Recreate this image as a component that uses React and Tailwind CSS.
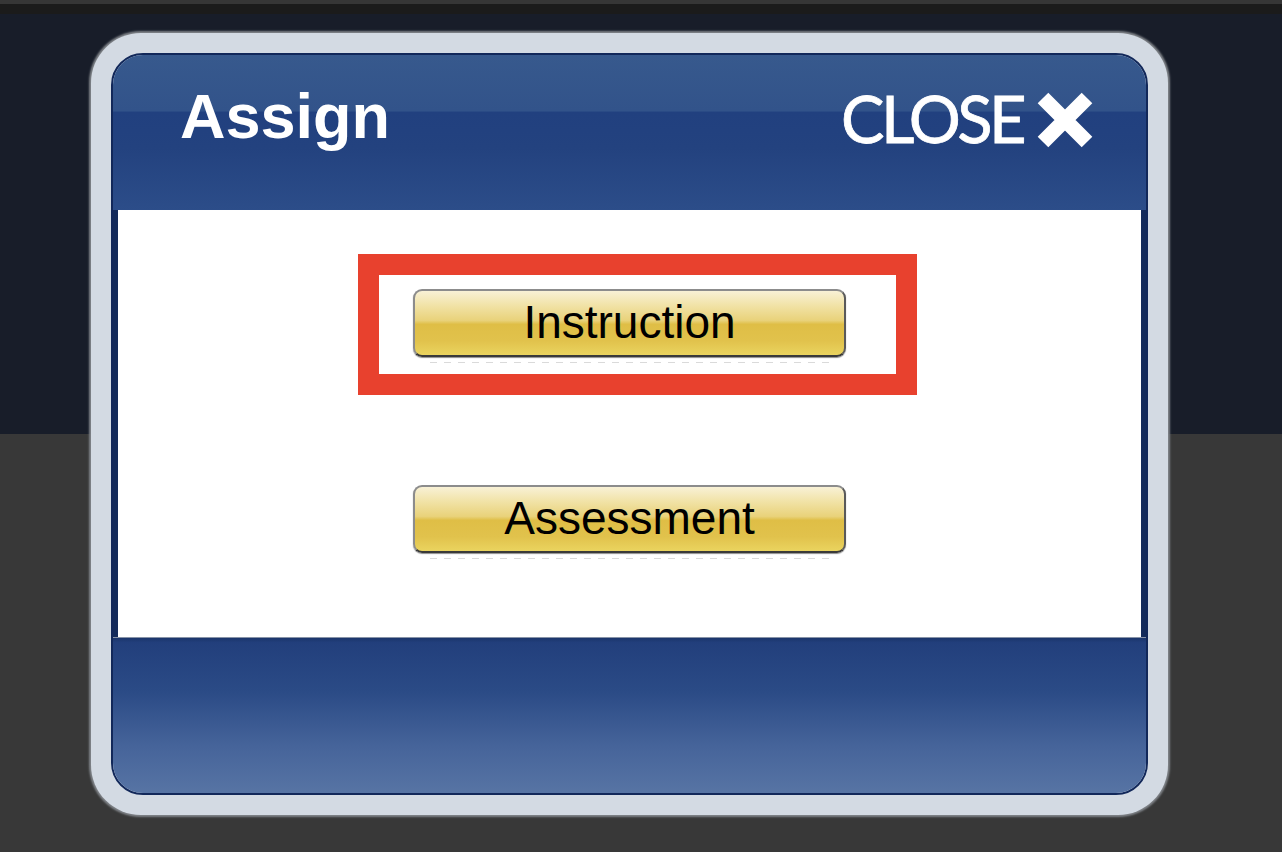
import React from "react";

const GoldButton = ({ label }) => {
  return (
    <div className="flex flex-col items-center gap-[5px]">
      <button className="w-[433px] h-[68px] flex items-center justify-center pb-[2px] rounded-[9px] border-2 border-[#8c8c8c] border-r-[#5a5a5a] border-b-[#3a3a3a] bg-[linear-gradient(180deg,#f8f1d6_0%,#f1e3a8_22%,#e9d27a_46%,#dfbe46_52%,#e1c24c_78%,#ead45f_100%)] shadow-[0_1px_1px_rgba(0,0,0,0.45)] text-[46px] leading-none text-black font-['Liberation_Sans',Arial,sans-serif]">
        {label}
      </button>
      <div className="w-[400px] h-px bg-[repeating-linear-gradient(90deg,#dadada_0_7px,transparent_7px_14px)]" />
    </div>
  );
};

const CloseIcon = () => (
  <svg width="56" height="56" viewBox="0 0 56 56" fill="none">
    <path d="M6 6 L50 50 M50 6 L6 50" stroke="white" strokeWidth="15" />
  </svg>
);

const App = () => {
  return (
    <div className="relative w-full h-[852px] flex flex-col bg-[#383838] overflow-hidden font-['Liberation_Sans',Arial,sans-serif]">
      <div className="h-[4px] bg-[#363636]" />
      <div className="h-[10px] bg-[#1b1b1b]" />
      <div className="h-[420px] bg-[#181d29]" />
      <div className="flex-1 bg-[#383838]" />

      {/* dialog */}
      <div className="absolute left-[91px] top-[33px] w-[1077px] h-[782px] rounded-[50px] bg-[#d3dae3] p-[20px] shadow-[0_0_2px_2px_#7f8388]">
        <div className="h-full flex flex-col rounded-[32px] overflow-hidden border-2 border-[#12285a]">
          <div className="h-[155px] shrink-0 flex items-start justify-between pl-[67px] pr-[53px] pt-[30px] bg-[linear-gradient(180deg,#37598d_0%,#32538a_36%,#21407f_37%,#23427f_60%,#2c4d89_100%)]">
            <h1 className="text-[63px] leading-none font-bold text-white">Assign</h1>
            <button className="flex items-start gap-[14px] text-white">
              <span className="mt-[1px] text-[65px] leading-none tracking-[-3.5px] font-['Lato',sans-serif] [-webkit-text-stroke:0.8px_white]">CLOSE</span>
              <span className="mt-[7px]"><CloseIcon /></span>
            </button>
          </div>

          <div className="h-[427px] shrink-0 flex bg-[#132a5a] px-[5px]">
            <div className="relative flex-1 bg-white flex flex-col items-center pt-[79px] gap-[122px]">
              <GoldButton label="Instruction" />
              <GoldButton label="Assessment" />
              <div className="absolute left-[240px] top-[44px] w-[559px] h-[141px] border-[21px] border-[#e8412e]" />
            </div>
          </div>

          <div className="h-px shrink-0 bg-[#8793a8]" />
          <div className="flex-1 bg-[linear-gradient(180deg,#1b356b_0%,#223f7c_3%,#2b4b86_35%,#46649a_70%,#5774a4_100%)]" />
        </div>
      </div>
    </div>
  );
};

export default App;
